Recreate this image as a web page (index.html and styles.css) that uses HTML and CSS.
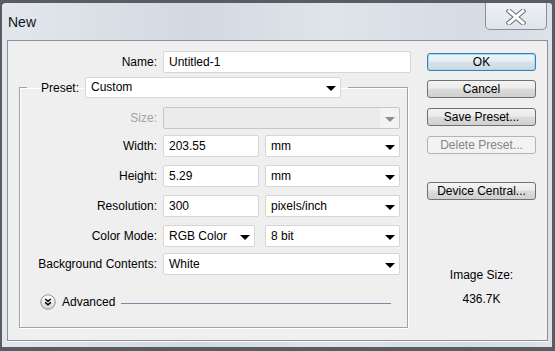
FILE: index.html
```html
<!DOCTYPE html>
<html>
<head>
<meta charset="utf-8">
<link rel="stylesheet" href="styles.css">
</head>
<body>
<div class="window">
  <div class="titlebar">
    <div class="title">New</div>
    <div class="close">
      <svg width="20" height="16" viewBox="0 0 20 16">
        <path d="M3 2 L17 14 M17 2 L3 14" stroke="#6d7178" stroke-width="5" stroke-linecap="square" fill="none"/>
        <path d="M3 2 L17 14 M17 2 L3 14" stroke="#ffffff" stroke-width="3" stroke-linecap="square" fill="none"/>
      </svg>
    </div>
  </div>
  <div class="panel">
    <div class="main">
      <div class="row name-row">
        <span class="label name-label">Name:</span>
        <div class="field name-field">Untitled-1</div>
      </div>
      <fieldset class="group">
        <legend class="legend">
          <div class="legend-inner">
            <span class="label">Preset:</span>
            <div class="field select preset-select"><span>Custom</span><i class="arrow"></i></div>
          </div>
        </legend>
        <div class="row r-size">
          <span class="label glabel disabled">Size:</span>
          <div class="field select disabled-field w-full"><span></span><i class="arrow grey"></i></div>
        </div>
        <div class="row r-width">
          <span class="label glabel">Width:</span>
          <div class="field w-num">203.55</div>
          <div class="field select w-unit"><span>mm</span><i class="arrow"></i></div>
        </div>
        <div class="row r-mid">
          <span class="label glabel">Height:</span>
          <div class="field w-num">5.29</div>
          <div class="field select w-unit"><span>mm</span><i class="arrow"></i></div>
        </div>
        <div class="row r-mid">
          <span class="label glabel">Resolution:</span>
          <div class="field w-num">300</div>
          <div class="field select w-unit"><span>pixels/inch</span><i class="arrow"></i></div>
        </div>
        <div class="row r-mid">
          <span class="label glabel">Color Mode:</span>
          <div class="field select w-mode"><span>RGB Color</span><i class="arrow"></i></div>
          <div class="field select w-unit"><span>8 bit</span><i class="arrow"></i></div>
        </div>
        <div class="row r-bg">
          <span class="label glabel">Background Contents:</span>
          <div class="field select w-full"><span>White</span><i class="arrow"></i></div>
        </div>
        <div class="advanced">
          <svg class="adv-icon" width="16" height="16" viewBox="0 0 16 16">
            <defs>
              <linearGradient id="g" x1="0" y1="0" x2="0" y2="1">
                <stop offset="0" stop-color="#ffffff"/>
                <stop offset="1" stop-color="#d4d4d4"/>
              </linearGradient>
            </defs>
            <circle cx="8" cy="8" r="7.2" fill="url(#g)" stroke="#8f8f8f" stroke-width="1"/>
            <path d="M5.2 5 L8 7.4 L10.8 5 M5.2 8.4 L8 10.8 L10.8 8.4" stroke="#000" stroke-width="1.4" fill="none"/>
          </svg>
          <span class="adv-text">Advanced</span>
          <span class="adv-line"></span>
        </div>
      </fieldset>
    </div>
    <div class="side">
      <div class="btn default">OK</div>
      <div class="btn b-gap">Cancel</div>
      <div class="btn b-gap2">Save Preset...</div>
      <div class="btn b-gap2 btn-disabled">Delete Preset...</div>
      <div class="btn b-gap3">Device Central...</div>
      <div class="info info-label">Image Size:</div>
      <div class="info info-value">436.7K</div>
    </div>
  </div>
</div>
</body>
</html>
```

FILE: styles.css
```css
html, body {
  margin: 0;
  padding: 0;
}
body {
  width: 555px;
  height: 351px;
  overflow: hidden;
  font-family: "Liberation Sans", Arial, sans-serif;
  font-size: 12px;
  color: #000;
  background: #5b5f66;
}
.window {
  box-sizing: border-box;
  width: 555px;
  height: 351px;
  border-style: solid;
  border-color: #595d63;
  border-width: 3px 3px 4px 2px;
  border-radius: 6px 6px 0 0;
  padding: 0 4px 6px 5px;
  background: linear-gradient(90deg, #e3e7ed 0%, #d3d9e1 35%, #dfe4ea 60%, #d5dce4 85%, #dde2e9 100%);
  display: flex;
  flex-direction: column;
}
.titlebar {
  height: 37px;
  display: flex;
  justify-content: space-between;
  align-items: flex-start;
  flex-shrink: 0;
}
.title {
  font-size: 14px;
  line-height: 16px;
  margin-top: 11px;
  margin-left: 1px;
  color: #0e1622;
}
.close {
  box-sizing: border-box;
  width: 62px;
  height: 27px;
  margin-right: 1px;
  border: 1px solid #8a8f96;
  border-top: none;
  border-radius: 0 0 5px 5px;
  background: linear-gradient(#eef1f5, #dfe4ea);
  display: flex;
  align-items: center;
  justify-content: center;
  padding-top: 1px;
}
.panel {
  box-sizing: border-box;
  height: 301px;
  border: 1px solid #8b9098;
  background: #efefef;
  display: flex;
  box-shadow: 0 1px 0 #fbfbfb;
}
.main {
  width: 403px;
  flex-shrink: 0;
}
.row {
  display: flex;
  align-items: center;
  gap: 6px;
}
.label {
  white-space: nowrap;
}
.name-row {
  margin-top: 10px;
}
.name-label {
  width: 149px;
  text-align: right;
}
.glabel {
  width: 137px;
  text-align: right;
}
.disabled {
  color: #a3a3a3;
}
.field {
  box-sizing: border-box;
  height: 22px;
  line-height: 20px;
  background: #fff;
  border: 1px solid #d6d6d6;
  border-radius: 2px;
  padding: 0 5px;
  white-space: nowrap;
}
.name-field {
  width: 248px;
}
.select {
  display: flex;
  justify-content: space-between;
  align-items: center;
  padding-right: 4px;
}
.arrow {
  width: 0;
  height: 0;
  border-left: 5px solid transparent;
  border-right: 5px solid transparent;
  border-top: 5px solid #000;
  margin-top: 2px;
}
.arrow.grey {
  border-top-color: #8d8d8d;
}
.disabled-field {
  background: linear-gradient(90deg, #ebebeb 0%, #ebebeb 92%, #f3f3f3 92%);
  border-color: #c6c6c6;
}
.group {
  box-sizing: border-box;
  width: 389px;
  margin: 4px 0 0 11px;
  padding: 0 0 17px 0;
  border: 1px solid #a3a3a3;
  box-shadow: 1px 1px 0 #fff, inset 1px 1px 0 #fff;
  min-width: 0;
}
.legend {
  padding: 0 7px 0 14px;
  margin-left: 7px;
}
.legend-inner {
  display: flex;
  align-items: center;
  gap: 6px;
}
.preset-select {
  width: 256px;
  height: 21px;
  line-height: 19px;
}
.r-size {
  margin-top: 9px;
}
.r-width {
  margin-top: 6px;
}
.r-mid {
  margin-top: 8px;
}
.r-bg {
  margin-top: 6px;
}
.w-full {
  width: 237px;
}
.w-num {
  width: 96px;
}
.w-unit {
  width: 135px;
}
.w-mode {
  width: 92px;
  margin-right: 4px;
}
.advanced {
  display: flex;
  align-items: center;
  margin: 19px 0 0 20px;
  height: 16px;
}
.adv-icon {
  display: block;
}
.adv-text {
  margin-left: 6px;
}
.adv-line {
  height: 1px;
  width: 270px;
  margin-left: 6px;
  margin-top: 2px;
  background: #8c849c;
}
.side {
  width: 109px;
  margin-left: 16px;
  padding-top: 12px;
  display: flex;
  flex-direction: column;
}
.btn {
  box-sizing: border-box;
  height: 18px;
  line-height: 16px;
  text-align: center;
  border: 1px solid #707070;
  border-radius: 3px;
  background: linear-gradient(#f3f3f3 0%, #ebebeb 45%, #dcdcdc 50%, #d0d0d0 100%);
  white-space: nowrap;
}
.btn.default {
  border-color: #3c7fb1;
  box-shadow: inset 0 0 0 1px #9fdcf8;
  background: linear-gradient(#eef6fb 0%, #e6eef3 45%, #d8e2e8 50%, #cdd8de 100%);
}
.b-gap {
  margin-top: 9px;
}
.b-gap2 {
  margin-top: 10px;
}
.b-gap3 {
  margin-top: 28px;
}
.btn-disabled {
  border-color: #b0b4b7;
  background: #f3f3f3;
  color: #858585;
}
.info {
  text-align: center;
  line-height: 14px;
}
.info-label {
  margin-top: 68px;
}
.info-value {
  margin-top: 10px;
}
```
